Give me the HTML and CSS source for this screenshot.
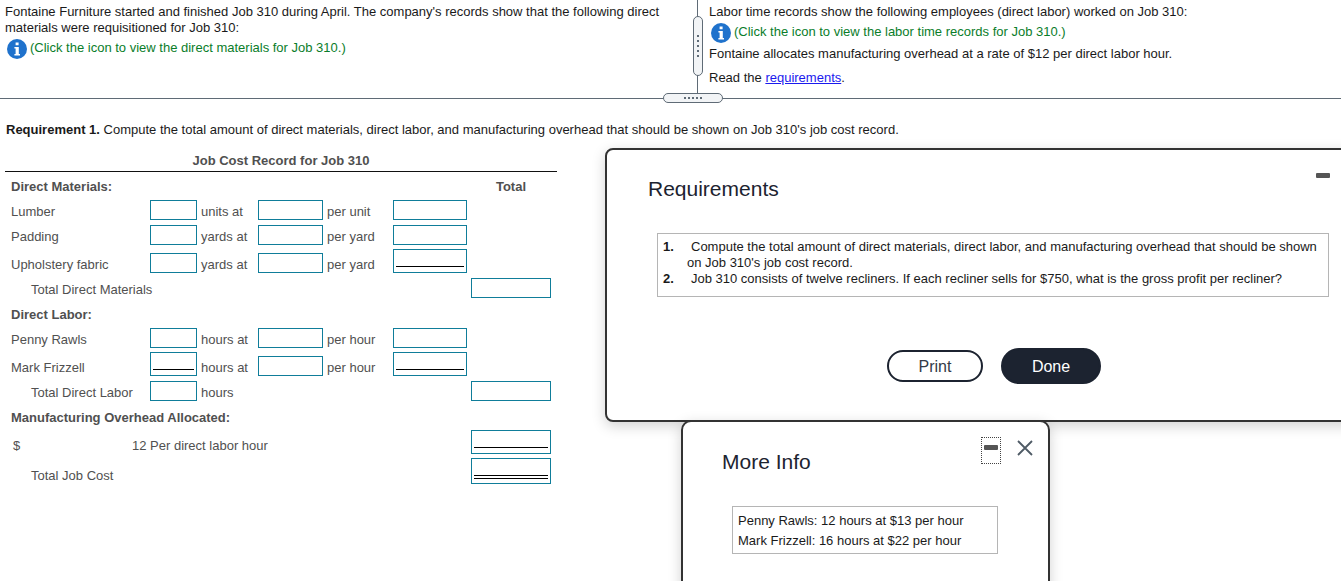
FILE: index.html
```html
<!DOCTYPE html>
<html lang="en">
<head>
<meta charset="utf-8">
<title>Job Cost Record for Job 310</title>
<link rel="stylesheet" href="styles.css">
</head>
<body>
<main class="page">
  <section class="split">
    <div class="pane-left">
      <p class="line">Fontaine Furniture started and finished Job 310 during April. The company's records show that the following direct materials were requisitioned for Job 310:</p>
      <p class="info-line">
        <svg class="info" viewBox="0 0 20 20"><circle cx="10" cy="10" r="10" fill="#1f72cc"/><path fill="#fff" d="M8.6 3.4h3v2.8h-3zM7.4 8h4.4v7h1.2v1.6H7.4V15h1.2V9.600H7.400z"/></svg>
        <span class="green">(Click the icon to view the direct materials for Job 310.)</span>
      </p>
    </div>
    <div class="vdivider"><div class="vhandle"><i></i><i></i><i></i><i></i><i></i></div></div>
    <div class="pane-right">
      <p class="line">Labor time records show the following employees (direct labor) worked on Job 310:</p>
      <p class="info-line right-info">
        <svg class="info" viewBox="0 0 20 20"><circle cx="10" cy="10" r="10" fill="#1f72cc"/><path fill="#fff" d="M8.6 3.4h3v2.8h-3zM7.4 8h4.4v7h1.2v1.6H7.4V15h1.2V9.600H7.400z"/></svg>
        <span class="green">(Click the icon to view the labor time records for Job 310.)</span>
      </p>
      <p class="line overhead">Fontaine allocates manufacturing overhead at a rate of $12 per direct labor hour.</p>
      <p class="line read">Read the <a href="#req">requirements</a>.</p>
    </div>
  </section>
  <div class="hdivider"><div class="hhandle"><i></i><i></i><i></i><i></i><i></i></div></div>
  <p class="req-title"><b>Requirement 1.</b> Compute the total amount of direct materials, direct labor, and manufacturing overhead that should be shown on Job 310's job cost record.</p>

  <section class="record">
    <h2 class="record-title">Job Cost Record for Job 310</h2>
    <div class="grid">
      <div class="lbl bold span6">Direct Materials:</div>
      <div class="total-head">Total</div>

      <div class="lbl">Lumber</div>
      <div class="box"></div><div class="unit">units at</div>
      <div class="box"></div><div class="unit">per unit</div>
      <div class="box"></div><div class="blank"></div>

      <div class="lbl">Padding</div>
      <div class="box"></div><div class="unit">yards at</div>
      <div class="box"></div><div class="unit">per yard</div>
      <div class="box"></div><div class="blank"></div>

      <div class="lbl">Upholstery fabric</div>
      <div class="box"></div><div class="unit">yards at</div>
      <div class="box"></div><div class="unit">per yard</div>
      <div class="box tall"><span></span></div><div class="blank"></div>

      <div class="lbl indent span6">Total Direct Materials</div>
      <div class="box"></div>

      <div class="lbl bold span7">Direct Labor:</div>

      <div class="lbl">Penny Rawls</div>
      <div class="box"></div><div class="unit">hours at</div>
      <div class="box"></div><div class="unit">per hour</div>
      <div class="box"></div><div class="blank"></div>

      <div class="lbl">Mark Frizzell</div>
      <div class="box tall"><span></span></div><div class="unit">hours at</div>
      <div class="box"></div><div class="unit">per hour</div>
      <div class="box tall"><span></span></div><div class="blank"></div>

      <div class="lbl indent">Total Direct Labor</div>
      <div class="box"></div><div class="unit span5">hours</div>
      <div class="box"></div>

      <div class="lbl bold span7">Manufacturing Overhead Allocated:</div>

      <div class="lbl span6 rate"><span class="dollar">$</span><span>12 Per direct labor hour</span></div>
      <div class="box tall"><span></span></div>

      <div class="lbl indent span6">Total Job Cost</div>
      <div class="box tall dbl"><span></span></div>
    </div>
  </section>
</main>

<aside class="dialog requirements" id="req">
  <svg class="minus req-minus" viewBox="0 0 14 5"><rect width="14" height="5" rx="1" fill="#555"/></svg>
  <h2 class="dialog-title">Requirements</h2>
  <div class="req-box">
    <ol class="req-list">
      <li><b>1.</b><span>Compute the total amount of direct materials, direct labor, and manufacturing overhead that should be shown on Job 310's job cost record.</span></li>
      <li><b>2.</b><span>Job 310 consists of twelve recliners. If each recliner sells for $750, what is the gross profit per recliner?</span></li>
    </ol>
  </div>
  <div class="actions">
    <button class="btn print">Print</button>
    <button class="btn done">Done</button>
  </div>
</aside>

<aside class="dialog more">
  <div class="win-tools">
    <div class="min-focus"><svg class="minus" viewBox="0 0 14 5"><rect width="14" height="5" rx="1" fill="#555"/></svg></div>
    <svg class="close" viewBox="0 0 16 16"><path d="M1 1l14 14M15 1L1 15" stroke="#4f5b66" stroke-width="1.800" fill="none"/></svg>
  </div>
  <h2 class="dialog-title">More Info</h2>
  <div class="info-box">
    <p>Penny Rawls: 12 hours at $13 per hour</p>
    <p>Mark Frizzell: 16 hours at $22 per hour</p>
  </div>
</aside>
</body>
</html>
```
FILE: styles.css
```css
* { box-sizing: border-box; }
html, body { margin: 0; padding: 0; height: 581px; overflow: hidden; background: #fff; }
body { font: 13px/16px "Liberation Sans", Arial, sans-serif; color: #1a1a1a; position: relative; width: 1341px; }
p, h2, ol { margin: 0; padding: 0; }

.split { display: flex; height: 98px; }
.pane-left { width: 692px; padding: 4px 20px 0 5px; }
.pane-right { flex: 1; padding: 4px 20px 0 11px; }
.vdivider { width: 1px; margin-left: 5px; background: #5f6b76; position: relative; }
.vhandle { position: absolute; left: -4px; top: 16px; width: 10px; height: 60px; background: #f2f4f6; border: 1px solid #5f6b76; border-radius: 5px; display: flex; flex-direction: column; align-items: center; justify-content: center; gap: 3px; }
.vhandle i, .hhandle i { display: block; width: 2px; height: 2px; background: #5f6b76; }
.hdivider { height: 1px; background: #5f6b76; position: relative; }
.hhandle { position: absolute; left: 663px; top: -5px; width: 60px; height: 10px; background: #f2f4f6; border: 1px solid #5f6b76; border-radius: 5px; display: flex; align-items: center; justify-content: center; gap: 2px; }

.info-line { display: flex; align-items: center; gap: 3px; height: 20px; margin-top: 3px; padding-left: 2px; }
.info { width: 20px; height: 20px; flex: none; }
.green { color: #0a7d2a; margin-bottom: 2px; }
.overhead { margin-top: 3px; }
.read { margin-top: 8px; }
a { color: #1a1aee; }

.req-title { margin: 23px 0 0 6px; }
.record { width: 552px; margin: 15px 0 0 5px; color: #505050; }
.record-title { font-size: 13px; line-height: 16px; font-weight: bold; text-align: center; padding-bottom: 2px; border-bottom: 1px solid #111; color: #505050; }
.grid { display: grid; grid-template-columns: 145px 47px 61px 65px 70px 74px 4px 80px 6px; grid-template-rows: 23px 25px 25px 28px 25px 25px 25px 28px 25px 25px 28px 30px; align-items: end; }
.lbl, .unit, .total-head { line-height: 16px; }
.lbl { padding-left: 6px; grid-column-start: 1; white-space: nowrap; }
.indent { padding-left: 26px; }
.bold, .total-head { font-weight: bold; }
.span6 { grid-column-end: span 6; }
.span7 { grid-column-end: span 7; }
.span5 { grid-column-end: span 4; }
.total-head { grid-column: 7 / span 2; text-align: center; padding-left: 4px; }
.unit { padding-left: 4px; white-space: nowrap; }
.blank { grid-column-end: span 2; }
.box { height: 20px; border: 1px solid #0f7d9a; background: #fff; }
.box.tall { height: 24px; padding: 0 2px 5px; display: flex; align-items: flex-end; }
.box.tall span { flex: 1; border-bottom: 1px solid #000; }
.span6 + .box { grid-column-start: 8; }
.unit.span5 + .box { grid-column-start: 8; }
.box.dbl { height: 26px; padding-bottom: 4px; }
.box.dbl span { border-bottom: 4px double #000; }
.rate { display: flex; }
.dollar { width: 121px; padding-left: 2px; }

.dialog { position: absolute; background: #fff; border: 2px solid #333; box-shadow: 0 4px 14px rgba(0,0,0,.18); }
.dialog-title { font-size: 21px; line-height: 24px; font-weight: normal; color: #1c2330; }
.requirements { left: 605px; top: 148px; width: 760px; height: 274px; border-radius: 8px; padding: 27px 0 0 41px; }
.req-minus { position: absolute; left: 709px; top: 23px; }
.minus { width: 14px; height: 5px; display: block; }
.req-box { width: 672px; height: 64px; margin: 32px 0 0 9px; border: 1px solid #b5b5b5; padding: 5px 5px; color: #1a1a1a; }
.req-list { list-style: none; }
.req-list li { position: relative; padding-left: 24px; }
.req-list b { position: absolute; left: 0; top: 0; }
.req-list span { display: block; text-indent: 4px; }
.actions { display: flex; align-items: center; gap: 18px; margin: 51px 0 0 239px; }
.btn { font: 16px "Liberation Sans", Arial, sans-serif; border-radius: 18px; padding: 2px 0 0; border: 2px solid #1c2330; }
.print { width: 96px; height: 32px; background: #fff; color: #333b48; }
.done { width: 100px; height: 36px; background: #1c2330; color: #fff; }

.more { left: 681px; top: 420px; width: 369px; height: 190px; border-radius: 10px; padding: 28px 0 0 39px; }
.win-tools { position: absolute; left: 298px; top: 15px; display: flex; align-items: flex-start; gap: 16px; }
.min-focus { width: 20px; height: 27px; border: 1px dotted #444; display: flex; justify-content: center; padding-top: 7px; }
.close { width: 16px; height: 16px; margin-top: 3px; }
.info-box { width: 266px; height: 48px; margin: 32px 0 0 10px; border: 1px solid #b5b5b5; padding: 4px 5px 0; line-height: 20px; color: #1a1a1a; }
```
